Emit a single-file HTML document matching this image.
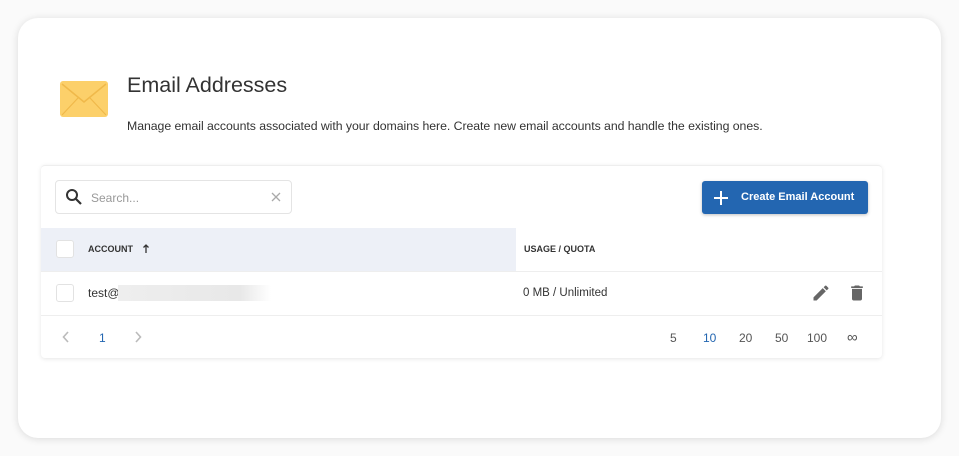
<!DOCTYPE html>
<html><head><style>
*{box-sizing:border-box;margin:0;padding:0}
body{width:959px;height:456px;background:#fafafa;font-family:"Liberation Sans",sans-serif;position:relative;overflow:hidden}
.outer{position:absolute;left:18px;top:18px;width:923px;height:420px;background:#fff;border-radius:20px;box-shadow:0 1px 8px rgba(0,0,0,.13)}
.a{position:absolute}
.card{position:absolute;left:41px;top:165px;width:841px;height:193px;background:#fff;border-radius:4px;box-shadow:0 1px 4px rgba(0,0,0,.1);border-top:1px solid #eee}
.cb{position:absolute;width:18px;height:18px;border:1px solid #e2e2e2;border-radius:3px;background:#fff}
</style></head><body>
<div class="outer"></div>
<svg class="a" style="left:60px;top:81px" width="48" height="36" viewBox="0 0 48 36"><rect width="48" height="36" rx="3" fill="#fcd06a"/><path d="M2 3 L24 21 L46 3" fill="none" stroke="#f0b94a" stroke-width="1.5"/><path d="M2 34 L18 17 M46 34 L30 17" stroke="#f0b94a" stroke-width="1.2"/></svg>
<div class="a" style="left:127px;top:73px;font-size:21.5px;color:#333">Email Addresses</div>
<div class="a" style="left:127px;top:119px;font-size:12.3px;color:#333;letter-spacing:-0.05px">Manage email accounts associated with your domains here. Create new email accounts and handle the existing ones.</div>
<div class="card">
 <div class="a" style="left:14px;top:14px;width:237px;height:34px;border:1px solid #e4e4e4;border-radius:4px"></div>
 <svg class="a" style="left:24px;top:22px" width="18" height="18" viewBox="0 0 18 18"><circle cx="7" cy="7" r="5" fill="none" stroke="#333" stroke-width="2"/><path d="M11 11 L16 16" stroke="#333" stroke-width="2.2"/></svg>
 <div class="a" style="left:50px;top:25px;font-size:12px;color:#999">Search...</div>
 <svg class="a" style="left:230px;top:26px" width="10" height="10"><path d="M1 1L9 9M9 1L1 9" stroke="#aaa" stroke-width="1.3"/></svg>
 <div class="a" style="left:661px;top:15px;width:166px;height:33px;background:#2366b1;border-radius:3px;box-shadow:0 1px 3px rgba(0,0,0,.25)"></div>
 <svg class="a" style="left:673px;top:25px" width="14" height="14"><path d="M7 0V14M0 7H14" stroke="#fff" stroke-width="2"/></svg>
 <div class="a" style="left:700px;top:25px;font-size:11px;color:#fff;font-weight:bold">Create Email Account</div>
 <div class="a" style="left:0;top:62px;width:475px;height:43px;background:#edf0f7"></div>
 <div class="a" style="left:0;top:105px;width:841px;height:1px;background:#eee"></div>
 <div class="a" style="left:0;top:149px;width:841px;height:1px;background:#eee"></div>
 <div class="cb" style="left:15px;top:74px"></div>
 <div class="a" style="left:47px;top:78px;font-size:9px;font-weight:bold;color:#333">ACCOUNT</div>
 <svg class="a" style="left:102px;top:78px" width="6" height="9"><path d="M3 1V9M0.5 3.5L3 1L5.5 3.5" fill="none" stroke="#333" stroke-width="1.3"/></svg>
 <div class="a" style="left:483px;top:78px;font-size:9px;font-weight:bold;color:#333">USAGE / QUOTA</div>
 <div class="cb" style="left:15px;top:118px"></div>
 <div class="a" style="left:47px;top:120px;font-size:12px;color:#333">test@</div>
 <div class="a" style="left:77px;top:119px;width:153px;height:16px;background:linear-gradient(90deg,#eee,#e8e8e8 80%,#fff)"></div>
 <div class="a" style="left:482px;top:121px;font-size:11.5px;color:#333">0 MB / Unlimited</div>
 <svg class="a" style="left:770px;top:117px" width="20" height="20" viewBox="0 0 24 24"><path fill="#666" d="M3 17.25V21h3.75L17.81 9.94l-3.75-3.75L3 17.25zM20.71 7.04a1 1 0 0 0 0-1.41l-2.34-2.34a1 1 0 0 0-1.41 0l-1.83 1.83 3.75 3.75 1.83-1.83z"/></svg>
 <svg class="a" style="left:806px;top:117px" width="20" height="20" viewBox="0 0 24 24"><path fill="#666" d="M6 19c0 1.1.9 2 2 2h8c1.1 0 2-.9 2-2V7H6v12zM19 4h-3.5l-1-1h-5l-1 1H5v2h14V4z"/></svg>
 <svg class="a" style="left:21px;top:165px" width="8" height="12"><path d="M6 1L1.5 6L6 11" fill="none" stroke="#bbb" stroke-width="1.6"/></svg>
 <div class="a" style="left:58px;top:165px;font-size:12px;color:#2366b1">1</div>
 <svg class="a" style="left:93px;top:165px" width="8" height="12"><path d="M2 1L6.5 6L2 11" fill="none" stroke="#bbb" stroke-width="1.6"/></svg>
 <div class="a" style="left:629px;top:165px;font-size:12px;color:#555">5</div>
 <div class="a" style="left:662px;top:165px;font-size:12px;color:#2366b1">10</div>
 <div class="a" style="left:698px;top:165px;font-size:12px;color:#555">20</div>
 <div class="a" style="left:734px;top:165px;font-size:12px;color:#555">50</div>
 <div class="a" style="left:766px;top:165px;font-size:12px;color:#555">100</div>
 <div class="a" style="left:806px;top:163px;font-size:15px;color:#555">∞</div>
</div>
</body></html>
